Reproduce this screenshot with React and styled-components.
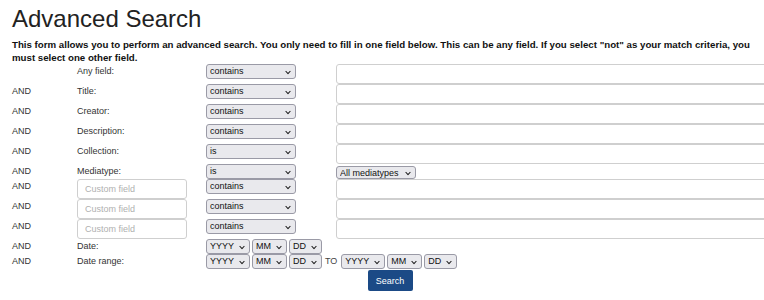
import React from 'react';
import styled, { createGlobalStyle } from 'styled-components';

const GlobalStyle = createGlobalStyle`
    html, body {
        margin: 0;
        padding: 0;
        overflow: hidden;
        background: #fff;
        font-family: "Liberation Sans", Arial, sans-serif;
    }
`;

const Page = styled.div`
    padding: 5px 0 0 12px;
    width: 756px;
    color: #333;
`;

const Title = styled.h1`
    margin: 0;
    font-size: 24px;
    line-height: 28px;
    font-weight: normal;
    color: #222;
`;

const Intro = styled.p`
    margin: 5px 0 0;
    font-size: 9.7px;
    line-height: 13px;
    font-weight: bold;
    color: #111;
`;

const Row = styled.div`
    display: grid;
    grid-template-columns: 65px 129px 130px 432px;
    align-items: start;
    font-size: 9px;
    line-height: 15px;
`;

const Cell = styled.div`
    grid-column: ${(props) => props.span || 'auto'};
    display: flex;
    align-items: center;
    gap: ${(props) => props.gap || 0}px;
`;

const SelectWrap = styled.span`
    position: relative;
    display: inline-flex;
    width: ${(props) => props.width}px;
    height: ${(props) => props.height || 15}px;
    margin-top: ${(props) => props.offset || 0}px;
`;

const StyledSelect = styled.select`
    appearance: none;
    width: 100%;
    height: 100%;
    margin: 0;
    padding: 0 10px 0 3px;
    border: 1px solid #9a9aa6;
    border-radius: 3px;
    background: #e9e9ed;
    color: #111;
    font-family: "Liberation Sans", Arial, sans-serif;
    font-size: 9px;
    line-height: 13px;
    outline: none;
`;

const Chevron = styled.svg`
    position: absolute;
    right: 5px;
    top: 50%;
    width: 6px;
    height: 4px;
    transform: translateY(-40%);
    pointer-events: none;
`;

const TextInput = styled.input`
    box-sizing: border-box;
    width: ${(props) => props.width || 440}px;
    height: 20px;
    margin: 0;
    padding: 0 7px;
    border: 1px solid #cfcfcf;
    border-radius: 3px;
    background: #fff;
    font-family: "Liberation Sans", Arial, sans-serif;
    font-size: 9px;
    color: #333;
    outline: none;

    &::placeholder {
        color: #b0b0b0;
    }
`;

const ToLabel = styled.span`
    margin: 0 2px 0 1px;
    color: #444;
`;

const ButtonRow = styled.div`
    display: flex;
    justify-content: center;
    padding-top: 1px;
`;

const SearchButton = styled.button`
    width: 45px;
    height: 21px;
    border: none;
    border-radius: 2px;
    background: #1b4a86;
    color: #fff;
    font-family: "Liberation Sans", Arial, sans-serif;
    font-size: 9px;
    cursor: pointer;
`;

const Select = ({ width, height, offset, value }) => (
    <SelectWrap width={width} height={height} offset={offset}>
        <StyledSelect defaultValue={value}>
            <option>{value}</option>
        </StyledSelect>
        <Chevron viewBox="0 0 6 4">
            <path d="M0.6 0.6 L3 3.2 L5.4 0.6" fill="none" stroke="#222" strokeWidth="1.1" />
        </Chevron>
    </SelectWrap>
);

const fields = [
    { label: 'Any field:', match: 'contains', first: true },
    { label: 'Title:', match: 'contains' },
    { label: 'Creator:', match: 'contains' },
    { label: 'Description:', match: 'contains' },
    { label: 'Collection:', match: 'is' },
];

const DateSelects = () => (
    <>
        <Select width={44} value="YYYY" />
        <Select width={35} value="MM" />
        <Select width={33} value="DD" />
    </>
);

const App = () => {
    return (
        <Page>
            <GlobalStyle />
            <Title>Advanced Search</Title>
            <Intro>
                This form allows you to perform an advanced search. You only need to fill in one field
                below. This can be any field. If you select "not" as your match criteria, you must
                select one other field.
            </Intro>

            {fields.map((field) => (
                <Row key={field.label}>
                    <Cell>{field.first ? '' : 'AND'}</Cell>
                    <Cell>{field.label}</Cell>
                    <Cell>
                        <Select width={90} value={field.match} />
                    </Cell>
                    <Cell>
                        <TextInput type="text" />
                    </Cell>
                </Row>
            ))}

            <Row>
                <Cell>AND</Cell>
                <Cell>Mediatype:</Cell>
                <Cell>
                    <Select width={90} value="is" />
                </Cell>
                <Cell>
                    <Select width={80} height={13} offset={2} value="All mediatypes" />
                </Cell>
            </Row>

            {[1, 2, 3].map((n) => (
                <Row key={n}>
                    <Cell>AND</Cell>
                    <Cell>
                        <TextInput type="text" width={110} placeholder="Custom field" />
                    </Cell>
                    <Cell>
                        <Select width={90} value="contains" />
                    </Cell>
                    <Cell>
                        <TextInput type="text" />
                    </Cell>
                </Row>
            ))}

            <Row>
                <Cell>AND</Cell>
                <Cell>Date:</Cell>
                <Cell span="3 / 5" gap={2}>
                    <DateSelects />
                </Cell>
            </Row>

            <Row>
                <Cell>AND</Cell>
                <Cell>Date range:</Cell>
                <Cell span="3 / 5" gap={2}>
                    <DateSelects />
                    <ToLabel>TO</ToLabel>
                    <DateSelects />
                </Cell>
            </Row>

            <ButtonRow>
                <SearchButton type="button">Search</SearchButton>
            </ButtonRow>
        </Page>
    );
};

export default App;
